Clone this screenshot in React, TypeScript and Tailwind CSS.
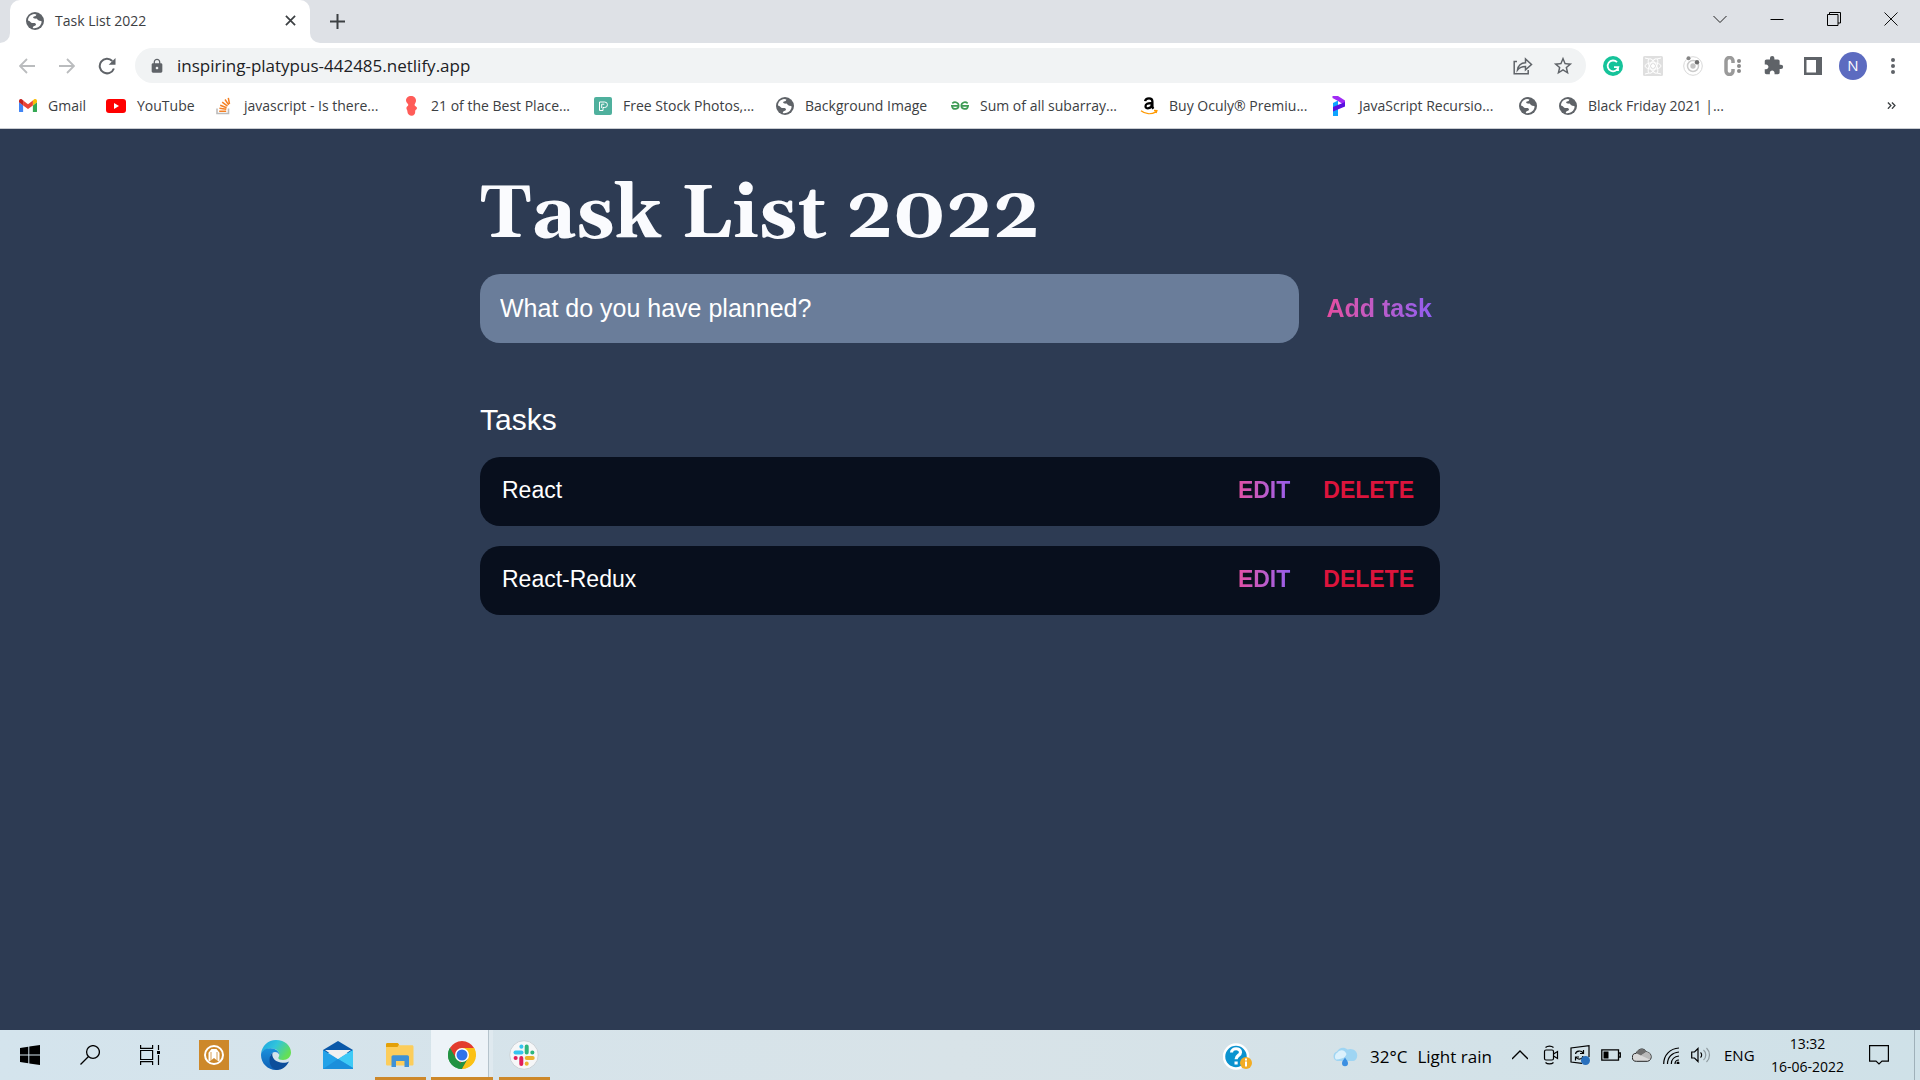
import type { ReactNode } from "react";
import { MdStarBorder, MdExtension, MdLock } from "react-icons/md";

const ui = "font-['Segoe_UI','Open_Sans',sans-serif]";
const arial = "font-['Liberation_Sans',Arial,sans-serif]";

function Globe() {
  return (
    <svg viewBox="0 0 18 18" className="size-[18px] shrink-0" aria-hidden="true">
      <circle cx="9" cy="9" r="9" fill="#5f6368" />
      <path d="M2 8.6C2 5 4.7 2.4 8.2 2.1l2.2.3c-.2 1.3-1 1.7-2.4 2-.9.2-1 1-.6 1.6.5.7 1.9.3 2.9.4 1.1.2 1.2 1.3 2 1.9.8.5 2.300.200 3.200.9.400 3-2.400 6.400-5.900 6.900-.9.100-1.900.1-2.800-.2.100-1.400.9-2 2.200-2.200 1.200-.2 1.200-1.500.5-2.200-1-.9-2.300-.4-3.600-.6-1.400-.2-1.700-1.900-3.900-2.300z" fill="#fff" />
      <path d="M11.300 2.400c2.500.9 4.500 3.200 4.700 6-.9.500-2.100.400-2.700-.1-.8-.7-.9-1.800-2.100-2.100-.9-.2-1.700.1-2.300-.3 1.400-.3 2.700-1.500 2.400-3.500z" fill="#5f6368" />
    </svg>
  );
}

function Gmail() {
  return (
    <svg viewBox="0 0 24 18" className="w-[18px] shrink-0" aria-hidden="true">
      <path d="M0 4v12.400C0 17.300.7 18 1.600 18H5.500V8.500z" fill="#4285f4" />
      <path d="M18.500 18h3.900c.9 0 1.600-.7 1.600-1.600V4l-5.500 4.500z" fill="#34a853" />
      <path d="M18.500 2v6.500L24 4.400V2.500C24 .4 21.500-.8 19.800.5z" fill="#fbbc04" />
      <path d="M5.500 8.500V2L12 6.900 18.500 2v6.500L12 13.400z" fill="#ea4335" />
      <path d="M0 2.500v1.900l5.500 4.100V2L4.200.5C2.500-.8 0 .4 0 2.500z" fill="#c5221f" />
    </svg>
  );
}

function YouTube() {
  return (
    <svg viewBox="0 0 20 14" className="w-5 shrink-0" aria-hidden="true">
      <rect width="20" height="14" rx="3" fill="#f00" />
      <path d="M8 4v6l5-3z" fill="#fff" />
    </svg>
  );
}

function StackOverflow() {
  return (
    <svg viewBox="0 0 18 18" className="size-[18px] shrink-0" fill="none" aria-hidden="true">
      <path d="M2 11.500v5h11.500v-5" stroke="#bcbbbb" strokeWidth="1.600" />
      <path d="M4.200 14.200h7M4.400 11.300l6.900.9M5.200 8.300l6.400 2.400M7.200 5.200l5.300 4M10 2.500l3.700 5.400M13.300.8l1.200 6.200" stroke="#f48024" strokeWidth="1.500" />
    </svg>
  );
}

function Figure() {
  return (
    <svg viewBox="0 0 18 20" className="h-5 w-[18px] shrink-0" aria-hidden="true">
      <path d="M9 0c2.900 0 5 2 5 4.500 0 1.700-.8 2.700-1.300 3.700-.4 1 .2 1.700 1.200 2.200 1.500.7 1.300 2.500.3 3.200-.9.700-1.100 1-1 2.200.2 2.300-1.400 4-3.500 4-2.300 0-4.300-1.600-4.300-4.200 0-1.700-1-2-1-3.600 0-1.700 1.900-1.700 1.900-3.200C6.300 7.500 4 7 4 4.500 4 2 6.100 0 9 0z" fill="#ff5c58" />
    </svg>
  );
}

function Pexels() {
  return (
    <svg viewBox="0 0 18 18" className="size-[18px] shrink-0" fill="none" aria-hidden="true">
      <rect width="18" height="18" rx="2" fill="#4fb09d" />
      <path d="M5.500 13.500V5h5.200a2.700 2.700 0 0 1 0 5.500H9v3zM7.700 11V7.200h2.600" stroke="#fff" strokeWidth="1" />
    </svg>
  );
}

function Geeks() {
  return (
    <svg viewBox="0 0 18 18" className="size-[18px] shrink-0" fill="none" stroke="#3f9b55" strokeWidth="1.700" aria-hidden="true">
      <path d="M0 8.800h8.300M1.300 6.300c2.600-2.200 6.400-.9 6.400 2.500 0 3.500-5.600 4.400-6.600.9M18 8.800H9.700M16.700 6.300c-2.600-2.200-6.400-.9-6.400 2.500 0 3.500 5.600 4.400 6.600.9" />
    </svg>
  );
}

function Amazon() {
  return (
    <svg viewBox="0 0 18 18" className="size-[18px] shrink-0" fill="none" aria-hidden="true">
      <path d="M5.100 4.200C5.400 2.100 7 1.300 9 1.300c2.300 0 3.400 1 3.400 3.200v4.800c0 1 .3 1.600 1 2.400M11.800 6.200C7.800 6 5.500 6.900 5.500 9.200c0 3.400 6.300 2.600 6.300-1.800z" stroke="#000" strokeWidth="2.300" />
      <path d="M1 13.800c4.300 3.500 10.300 3.700 15 1.100M14 13.500l2.900.200-.8 2.300" stroke="#f90" strokeWidth="1.300" />
    </svg>
  );
}

function Purple() {
  return (
    <svg viewBox="0 0 18 20" className="h-5 w-[18px] shrink-0" aria-hidden="true">
      <path d="M3 7l5-2.500V20H3z" fill="#0ea5ff" />
      <path d="M2.500 0H8l7 4.500v5L8 5 2.500 2z" fill="#a02bf5" />
      <path d="M15 6v4.500L3 15.500V11z" fill="#5a0fe0" />
    </svg>
  );
}

const bookmarks: { label: string; icon: ReactNode; width: string }[] = [
  { label: "Gmail", icon: <Gmail />, width: "w-[87px]" },
  { label: "YouTube", icon: <YouTube />, width: "w-[109px]" },
  { label: "javascript - Is there...", icon: <StackOverflow />, width: "w-[187px]" },
  { label: "21 of the Best Place...", icon: <Figure />, width: "w-[192px]" },
  { label: "Free Stock Photos,...", icon: <Pexels />, width: "w-[182px]" },
  { label: "Background Image", icon: <Globe />, width: "w-[175px]" },
  { label: "Sum of all subarray...", icon: <Geeks />, width: "w-[189px]" },
  { label: "Buy Oculy® Premiu...", icon: <Amazon />, width: "w-[190px]" },
  { label: "JavaScript Recursio...", icon: <Purple />, width: "w-[189px]" },
  { label: "", icon: <Globe />, width: "w-10" },
  { label: "Black Friday 2021 |...", icon: <Globe />, width: "w-[180px]" },
];

function TabStrip() {
  return (
    <div className="flex h-[43px] items-end bg-[#dee1e6]">
      <div className="size-[10px] bg-white">
        <div className="size-full rounded-br-full bg-[#dee1e6]" />
      </div>
      <div className="flex h-[43px] w-[300px] items-center rounded-t-[10px] bg-white pr-[13px] pb-[2px] pl-4 text-[#3c4043]">
        <Globe />
        <span className="ml-[11px] flex-1 text-[14px]">Task List 2022</span>
        <button type="button" aria-label="Close tab" className="p-[1px]">
          <svg viewBox="0 0 12 12" className="size-[11px]" stroke="#3c4043" strokeWidth="1.900" aria-hidden="true">
            <path d="M1 1l10 10M11 1L1 11" />
          </svg>
        </button>
      </div>
      <div className="size-[10px] bg-white">
        <div className="size-full rounded-bl-full bg-[#dee1e6]" />
      </div>
      <button type="button" aria-label="New tab" className="ml-[10px] self-center">
        <svg viewBox="0 0 15 15" className="size-[15px]" stroke="#3c4043" strokeWidth="2" aria-hidden="true">
          <path d="M7.500 0v15M0 7.500h15" />
        </svg>
      </button>
      <div className="mr-[1px] ml-auto flex h-[37px] items-center self-start">
        <button type="button" aria-label="Search tabs" className="flex w-[57px] justify-center">
          <svg viewBox="0 0 14 14" className="size-[14px]" fill="none" stroke="#222" aria-hidden="true"><path d="M.5 4l6.500 6.500L13.500 4" /></svg>
        </button>
        <button type="button" aria-label="Minimize" className="flex w-[57px] justify-center">
          <svg viewBox="0 0 14 14" className="size-[14px]" fill="none" stroke="#000" aria-hidden="true"><path d="M.5 7.500h13" /></svg>
        </button>
        <button type="button" aria-label="Restore" className="flex w-[57px] justify-center">
          <svg viewBox="0 0 14 14" className="size-[14px]" fill="none" stroke="#000" aria-hidden="true"><path d="M.5 2.500h10.500v11H.5zM2.500 2.500v-2h11v10.500h-2.500" /></svg>
        </button>
        <button type="button" aria-label="Close" className="flex w-[57px] justify-center">
          <svg viewBox="0 0 14 14" className="size-[14px]" fill="none" stroke="#111" aria-hidden="true"><path d="M.5.5l13 13M13.500.5l-13 13" /></svg>
        </button>
      </div>
    </div>
  );
}

function ToolButton({ label, children }: { label: string; children: ReactNode }) {
  return (
    <button type="button" aria-label={label} className="flex h-8 w-10 shrink-0 items-center justify-center">
      {children}
    </button>
  );
}

function Toolbar() {
  return (
    <div className="flex h-[45px] items-center bg-white pr-[7px] pl-[7px] text-[#5f6368]">
      <ToolButton label="Back">
        <svg viewBox="0 0 16 16" className="size-4" fill="none" stroke="#babcbe" strokeWidth="1.800" aria-hidden="true"><path d="M16 8H1.500M8 1L1 8l7 7" /></svg>
      </ToolButton>
      <ToolButton label="Forward">
        <svg viewBox="0 0 16 16" className="size-4" fill="none" stroke="#babcbe" strokeWidth="1.800" aria-hidden="true"><path d="M0 8h14.500M8 1l7 7-7 7" /></svg>
      </ToolButton>
      <ToolButton label="Reload">
        <svg viewBox="0 0 18 18" className="size-[18px]" fill="none" aria-hidden="true">
          <path d="M15.900 11.500A7.300 7.300 0 1 1 14.300 4" stroke="#5f6368" strokeWidth="2" />
          <path d="M17.500 1v6.800h-6.800z" fill="#5f6368" />
        </svg>
      </ToolButton>
      <div className="ml-2 flex h-[35px] flex-1 items-center rounded-full bg-[#f1f3f4] pr-[3px] pl-[14px]">
        <MdLock className="size-4" aria-hidden="true" />
        <input aria-label="Address" defaultValue="inspiring-platypus-442485.netlify.app" className="ml-3 min-w-0 flex-1 bg-transparent text-[17px] text-[#202124] outline-none" />
        <ToolButton label="Share">
          <svg viewBox="0 0 20 18" className="w-5" fill="none" stroke="#5f6368" strokeWidth="1.500" aria-hidden="true">
            <path d="M4 4.500H1.200v12.300h14V13M4.500 13c.7-4.800 3.500-7 8-7.200V2l6 5.500-6 5.300V9.500c-3.600 0-6 .9-8 3.500z" />
          </svg>
        </ToolButton>
        <ToolButton label="Bookmark this tab">
          <MdStarBorder className="size-[22px]" aria-hidden="true" />
        </ToolButton>
      </div>
      <div className="ml-[7px] flex items-center">
        <ToolButton label="Grammar">
          <svg viewBox="0 0 20 20" className="size-5" fill="none" aria-hidden="true">
            <circle cx="10" cy="10" r="10" fill="#15c39a" />
            <path d="M14 6.200A5.400 5.400 0 1 0 15.300 11.200H11M15 11v4" stroke="#fff" strokeWidth="1.800" />
          </svg>
        </ToolButton>
        <ToolButton label="React tools">
          <svg viewBox="0 0 20 20" className="size-5" fill="none" stroke="#fff" aria-hidden="true">
            <rect width="20" height="20" rx="1.500" fill="#dfdfdf" stroke="none" />
            <ellipse cx="10" cy="10" rx="8" ry="3.300" /><ellipse cx="10" cy="10" rx="8" ry="3.300" transform="rotate(60 10 10)" /><ellipse cx="10" cy="10" rx="8" ry="3.300" transform="rotate(120 10 10)" />
            <circle cx="10" cy="10" r="1.500" fill="#fff" />
            <path d="M2 2l4 1M18 2l-4 1M2 18l4-1M18 18l-4-1" />
          </svg>
        </ToolButton>
        <ToolButton label="Orbit">
          <svg viewBox="0 0 20 20" className="size-5" fill="none" stroke="#ccc" aria-hidden="true">
            <circle cx="10" cy="10" r="9.300" stroke="#d8d8d8" /><circle cx="10" cy="10" r="5.500" strokeWidth="1.500" /><circle cx="10" cy="10" r="2.700" fill="#c4c4c4" stroke="none" />
            <circle cx="5.500" cy="2.200" r="2" fill="#858585" stroke="none" /><circle cx="14" cy="6.300" r="2.200" fill="#6d6d6d" stroke="none" />
          </svg>
        </ToolButton>
        <ToolButton label="Clipboard">
          <svg viewBox="0 0 20 20" className="size-5" fill="none" aria-hidden="true">
            <path d="M10 7V5a3.500 3.500 0 0 0-7 0v10a3.500 3.500 0 0 0 7 0v-2" stroke="#9a9a9a" strokeWidth="3.500" />
            <circle cx="16" cy="5" r="2" fill="#8a8a8a" /><circle cx="16" cy="10" r="2" fill="#8a8a8a" /><circle cx="16" cy="15" r="2" fill="#8a8a8a" />
          </svg>
        </ToolButton>
        <ToolButton label="Extensions"><MdExtension className="size-[21px]" aria-hidden="true" /></ToolButton>
        <ToolButton label="Side panel">
          <svg viewBox="0 0 18 18" className="size-[18px]" fill="#5f6368" aria-hidden="true"><path fillRule="evenodd" d="M0 0h18v18H0zM2.500 3v12.500H12V3z" /></svg>
        </ToolButton>
        <ToolButton label="Profile">
          <span className="flex size-7 items-center justify-center rounded-full bg-[#5c6bc0] text-[15px] text-white">N</span>
        </ToolButton>
        <ToolButton label="Menu">
          <svg viewBox="0 0 4 16" className="h-4" fill="#5f6368" aria-hidden="true"><circle cx="2" cy="2" r="2" /><circle cx="2" cy="8" r="2" /><circle cx="2" cy="14" r="2" /></svg>
        </ToolButton>
      </div>
    </div>
  );
}

function Bookmarks() {
  return (
    <nav aria-label="Bookmarks" className="flex h-[41px] items-center border-b border-[#c9ccd1] bg-white pr-6 pb-[5px] pl-[19px] text-[14px] text-[#3c4043]">
      {bookmarks.map((b, i) => (
        <a key={i} href="#" aria-label={b.label || "Bookmark"} className={`flex shrink-0 items-center gap-[11px] whitespace-nowrap ${b.width}`}>
          {b.icon}
          {b.label}
        </a>
      ))}
      <button type="button" aria-label="More bookmarks" className="ml-auto">
        <svg viewBox="0 0 10 8" className="w-[9px]" fill="none" stroke="#3c4043" strokeWidth="1.500" aria-hidden="true"><path d="M1 .5L4.300 4 1 7.500M5.500.5L8.800 4 5.500 7.500" /></svg>
      </button>
    </nav>
  );
}

const gradientText = "bg-linear-to-r from-[#ec4899] to-[#8b5cf6] bg-clip-text text-transparent";

function TaskPage() {
  return (
    <main className={`flex-1 bg-[#2d3b53] text-white ${arial}`}>
      <div className="mx-auto w-full max-w-[960px] pt-10">
        <h1 className="font-[Georgia,Gelasio,'DejaVu_Serif',serif] text-[75px] leading-[92px] font-bold whitespace-nowrap text-[#fafbfe]">Task List 2022</h1>
        <form className="mt-[13px] flex" onSubmit={(e) => e.preventDefault()}>
          <input type="text" aria-label="New task" placeholder="What do you have planned?" className="mr-[19px] h-[69px] min-w-0 flex-1 rounded-[20px] bg-[#6a7d9a] px-5 text-[25px] outline-none placeholder:text-white placeholder:opacity-100" />
          <button type="submit" className={`px-2 text-[25px] font-bold ${gradientText}`}>Add task</button>
        </form>
        <section className="mt-[57px]">
          <h2 className="text-[30px] leading-[40px]">Tasks</h2>
          <ul className="mt-[17px] flex flex-col gap-5">
            {["React", "React-Redux"].map((task) => (
              <li key={task} className="flex h-[69px] items-center rounded-[20px] bg-[#080f1d] px-[18px] pb-[2px] text-[23px]">
                <span className="flex-1 pl-1">{task}</span>
                <button type="button" aria-label={`Edit ${task}`} className={`mr-[17px] px-2 font-bold ${gradientText}`}>EDIT</button>
                <button type="button" aria-label={`Delete ${task}`} className="px-2 font-bold text-[#dc143c]">DELETE</button>
              </li>
            ))}
          </ul>
        </section>
      </div>
    </main>
  );
}

function Slot({ label, wide, running, children }: { label: string; wide?: boolean; running?: boolean; children: ReactNode }) {
  return (
    <button type="button" aria-label={label} className={`flex h-[50px] flex-col items-center ${wide ? "w-[62px]" : "w-[60px]"}`}>
      <span className="flex flex-1 items-center pt-[3px]">{children}</span>
      <span className={`h-[3px] w-[51px] ${running ? "bg-[#cd882a]" : ""}`} />
    </button>
  );
}

function Edge() {
  return (
    <svg viewBox="0 0 30 30" className="size-[30px]" aria-hidden="true">
      <defs>
        <linearGradient id="edgeTop" x1="0" y1="0" x2="1" y2=".5"><stop offset="0" stopColor="#1ba1e2" /><stop offset=".5" stopColor="#31c4dc" /><stop offset="1" stopColor="#65df55" /></linearGradient>
        <linearGradient id="edgeLow" x1="0" y1="0" x2="0" y2="1"><stop offset="0" stopColor="#1a91dd" /><stop offset="1" stopColor="#0f5fb4" /></linearGradient>
      </defs>
      <path d="M0 14C.8 6 7 0 15 0c9 0 15 6 15 12.500 0 4.500-3.500 7.500-8 7.500-3 0-4.700-1-4.700-2 0-.8 1-1.300 1-3.300 0-3.200-3-6.200-7.500-6.200C5.500 8.500 1 10.500 0 14z" fill="url(#edgeTop)" />
      <path d="M0 15c0-4 4-6.800 9.300-6.800 5.200 0 9 3 9 6.500-1-2-2.500-2.700-4.300-2.700-3 0-5 3-5 6.500 0 5.500 4 9.500 9.500 10.800-1 .5-2.300.7-3.500.7C6.700 30 0 23.300 0 15z" fill="url(#edgeLow)" />
      <path d="M12 12.500c-1.500 1.200-1.200 9.300 9.500 10.300 2.700.2 5-.5 6.500-1.300C25.500 26.500 21 30 15.500 30 10 28.300 8.500 24 8.500 20c0-3.300 1.300-6.500 3.500-7.500z" fill="#0c4e9b" />
    </svg>
  );
}

function Taskbar() {
  return (
    <footer className="flex h-[50px] items-stretch bg-linear-to-r from-[#d4e4ed] via-[#d8e3e8] to-[#cfe1e8] text-black">
      <div className="flex gap-[3px]">
        <div className="flex">
          <Slot label="Start">
            <svg viewBox="0 0 20 20" className="size-5" aria-hidden="true"><path d="M0 3l8.300-1.200v7.700H0zM9.300 1.600L20 0v9.500H9.300zM0 10.500h8.300v7.700L0 17zM9.300 10.500H20V20L9.300 18.400z" /></svg>
          </Slot>
          <Slot label="Search">
            <svg viewBox="0 0 20 20" className="size-5" fill="none" stroke="#000" strokeWidth="1.300" aria-hidden="true"><circle cx="13" cy="7" r="6.400" /><path d="M8.500 11.500L.5 19.500" /></svg>
          </Slot>
          <Slot label="Task view">
            <svg viewBox="0 0 20 20" className="size-5" fill="none" stroke="#000" strokeWidth="1.200" aria-hidden="true"><path d="M.6 0v3.400h12V0M.6 20v-3.400h12V20M.6 5.500h12v9H.6zM18.500 0v5M18.500 10v10" /><path d="M17 6h3v3h-3z" fill="#000" stroke="none" /></svg>
          </Slot>
        </div>
        <div className="flex">
          <Slot wide label="Home app">
            <svg viewBox="0 0 30 30" className="size-[30px]" fill="none" aria-hidden="true">
              <path d="M0 0h30v30H0z" fill="#cd882a" />
              <circle cx="15" cy="15" r="9" stroke="#fff" strokeWidth="2" />
              <path d="M9.500 21.500v-8.800L12.500 9h5l3 3.700v8.800l-3-1.500-2.500-2-2.500 2z" fill="#fff" />
              <path d="M12 20v-8M18 20v-8" stroke="#cd882a" strokeWidth=".8" />
            </svg>
          </Slot>
          <Slot wide label="Edge"><Edge /></Slot>
          <Slot wide label="Mail">
            <svg viewBox="0 0 30 28" className="w-[30px]" aria-hidden="true">
              <path d="M0 9L15 0l15 9v3H0z" fill="#0a58a8" />
              <path d="M0 9l15 9 15-9v19H0z" fill="#23a2e8" /><path d="M30 9v18L15 18z" fill="#3fcaf6" /><path d="M0 28l15-10 15 9v1z" fill="#1b8fdb" />
              <path d="M2 9h26L15 18z" fill="#f1f1f1" />
            </svg>
          </Slot>
          <Slot wide running label="File Explorer">
            <svg viewBox="0 0 28 24" className="w-7" aria-hidden="true">
              <path d="M0 1.500C0 .7.700 0 1.500 0H12l1.500 2.200H26c1 0 1.500.6 1.500 1.500V21c0 1-.5 1.500-1.500 1.500H1.500C.7 22.500 0 22 0 21z" fill="#fccd5b" />
              <path d="M0 4V1.500C0 .7.700 0 1.500 0h10l1.500 1.500L11.500 4z" fill="#e3a008" />
              <path d="M5.500 24V14c0-1 .7-1.700 1.700-1.700h14.100c1 0 1.700.7 1.700 1.700v10h-4.500v-6H10v6z" fill="#3f92d6" />
            </svg>
          </Slot>
          <button type="button" aria-label="Chrome" className="flex h-[50px] w-[62px] flex-col bg-[#edf3f8]">
            <span className="flex flex-1 self-stretch">
              <span className="flex flex-1 items-center justify-center pt-[3px] pl-1">
                <svg viewBox="0 0 28 28" className="size-7" aria-hidden="true">
                  <path d="M14 14L1.880 7A14 14 0 0 1 26.120 7z" fill="#e33b2e" />
                  <path d="M14 14L26.120 7A14 14 0 0 1 14 28z" fill="#fbc116" />
                  <path d="M14 14V28A14 14 0 0 1 1.880 7z" fill="#229342" />
                  <path d="M14 7h12.120L24 14h-4zM20 17.500L14 28l-3-8zM1.880 7L8 17.500 11 10z" fill="#e33b2e" />
                  <path d="M14 7h12.120a14 14 0 0 1 1.500 9l-7.600 1.500z" fill="#fbc116" />
                  <path d="M20 17.500L14 28a14 14 0 0 1-6-1.300L14 20z" fill="#229342" />
                  <path d="M14 28l6-10.500 4-5L27 18a14 14 0 0 1-13 10z" fill="#fbc116" />
                  <path d="M1.880 7L8 17.500l4 4L8 26.700A14 14 0 0 1 1.880 7z" fill="#229342" />
                  <circle cx="14" cy="14" r="7" fill="#fff" /><circle cx="14" cy="14" r="5.500" fill="#2f73ec" />
                </svg>
              </span>
              <span className="w-[5px] border-l border-[#b5c3cc] bg-[#dfe9ef]" />
            </span>
            <span className="h-[3px] w-full bg-[#cd882a]" />
          </button>
          <Slot wide running label="Slack">
            <svg viewBox="0 0 30 30" className="size-[30px]" fill="none" strokeWidth="4" strokeLinecap="round" aria-hidden="true">
              <circle cx="15" cy="15" r="14.300" fill="#f6f7f8" stroke="#ccd3d8" strokeWidth="1" />
              <path d="M6.500 12.500h6" stroke="#36c5f0" /><path d="M12.400 6.600v.1" stroke="#36c5f0" />
              <path d="M17.700 12.500v-6M23.300 12.500h.1" stroke="#2eb67d" />
              <path d="M17.700 18h6M17.700 23.600v.1" stroke="#ecb22e" />
              <path d="M12.300 18v6M6.600 18h.1" stroke="#e01e5a" />
            </svg>
          </Slot>
        </div>
      </div>
      <div className="ml-auto flex items-center">
        <button type="button" aria-label="Help" className="mr-[79px] pt-[3px]">
          <svg viewBox="0 0 30 28" className="w-[30px]" fill="none" aria-hidden="true">
            <circle cx="13" cy="13.500" r="12" fill="#0b93cf" stroke="#fff" strokeWidth="2.500" />
            <path d="M8.500 9.500c.2-5 9-4.900 9-.3 0 3.400-4.400 3-4.400 7M13.100 18.500v3" stroke="#fff" strokeWidth="3.200" />
            <circle cx="23" cy="20" r="6" fill="#f2ac22" /><path d="M23 18.500v5M23 15.500v2" stroke="#fff" strokeWidth="2" />
          </svg>
        </button>
        <button type="button" className="flex w-[180px] items-center pt-[3px] text-[17px]">
          <svg viewBox="0 0 26 20" className="w-[26px]" aria-hidden="true">
            <path d="M5 14a5 5 0 0 1 0-9.500C7 .5 12-.8 15.500 2.500c5-2 10 1.500 9.700 6 0 3.500-2 5.500-5 5.500z" fill="#9fd5f3" />
            <path d="M4 12.500a4.500 4.500 0 0 1 1.500-7C8 2 13 2.500 14.500 7c-1 3-3 5-10.500 5.500z" fill="#dcf1fc" />
            <path d="M13 10.500c1.500 2.500 3 3.700 3 5.700a3 3 0 0 1-6 0c0-2 1.500-3.200 3-5.700z" fill="#3b8fe2" />
          </svg>
          <span className="ml-[12px]">32°C</span>
          <span className="ml-[10px] whitespace-nowrap">Light rain</span>
        </button>
        <div className="flex items-center gap-[11px]">
          <svg viewBox="0 0 16 16" className="size-4" fill="none" stroke="#000" strokeWidth="1.300" aria-hidden="true"><path d="M0 12l8-8 8 8" /></svg>
          <svg viewBox="2 0 16 20" className="ml-1 w-4" fill="none" stroke="#000" strokeWidth="1.200" aria-hidden="true"><rect x="3.500" y="5" width="9" height="10" rx="1.500" /><path d="M12.500 9l4-2.500v7l-4-2.500M4.500 2.500c2-1.800 6-1.800 8 0M4.500 17.500c2 1.800 6 1.800 8 0" /></svg>
          <svg viewBox="0 0 20 20" className="size-5" fill="none" stroke="#000" strokeWidth="1.200" aria-hidden="true"><path d="M12 18.300L1 17V3l18-2.300V12M5.500 9c.5-3.500 6-4 7.500-1M13.500 5v3.500H10M13 11c-.5 3.500-5 4-7 1.500M5.500 15.500V12H9" /><circle cx="15.500" cy="15.500" r="4.500" fill="#2970bd" stroke="none" /></svg>
          <svg viewBox="0 0 20 12" className="w-5" fill="none" stroke="#000" strokeWidth="1.300" aria-hidden="true"><path d="M.8.8H17.500v10.400H.8zM18 4h1.300v4H18" /><path d="M2.500 2.500h5v7h-5z" fill="#000" stroke="none" /></svg>
          <svg viewBox="0 0 20 14" className="w-5" stroke="#222" aria-hidden="true"><path d="M4.500 13.300a4 4 0 0 1-.3-8C6 .5 12-.8 14.300 4c6 0 6.500 8.500 1.200 9.300z" fill="#d9d9d9" /><path d="M4.200 5.300C6 .5 12-.8 14.300 4L9 7.500z" fill="#6f6f6f" stroke="none" /><path d="M9 7.500L14.300 4c4 0 5.300 4.500 3.500 7.500z" fill="#b9b9b9" stroke="none" /></svg>
          <svg viewBox="0 0 17 17" className="w-[17px]" fill="none" stroke="#000" strokeWidth="1.200" aria-hidden="true"><path d="M.7 17C.7 8 7 1.500 16 1M4.500 17C4.500 10 9 5.500 16 5M8.300 17c0-4.500 3.200-7.500 7.700-8" /><path d="M12 17c0-2.300 1.700-4 4-4" /><circle cx="15" cy="16" r="1.500" fill="#000" stroke="none" /></svg>
          <svg viewBox="0 0 20 16" className="w-5" fill="none" stroke="#000" strokeWidth="1.200" aria-hidden="true"><path d="M.7 5h2.800L7 1.500v13L3.500 11H.7zM9.500 5.500c1.500 1 1.500 4 0 5" /><path d="M12.500 3c3 2.500 3 7.500 0 10M15.500 1c4 4 4 10 0 14" stroke="#8f9a9f" /></svg>
        </div>
        <span className="ml-[13px] w-[46px] text-[15px]">ENG</span>
        <div className="flex w-[75px] flex-col items-center text-[14px] leading-[23px] whitespace-nowrap">
          <span>13:32</span>
          <span>16-06-2022</span>
        </div>
        <button type="button" aria-label="Notifications" className="ml-6">
          <svg viewBox="0 0 20 20" className="size-5" fill="none" stroke="#000" strokeWidth="1.200" aria-hidden="true"><path d="M.6.600h18.800v15.500h-6.400L10 19l-3-2.900H.6z" /></svg>
        </button>
        <div className="ml-[25px] h-full w-[6px] border-l border-[#9fb0b9]" />
      </div>
    </footer>
  );
}

export default function App() {
  return (
    <div className={`flex min-h-screen flex-col ${ui}`}>
      <header>
        <TabStrip />
        <Toolbar />
        <Bookmarks />
      </header>
      <TaskPage />
      <Taskbar />
    </div>
  );
}
